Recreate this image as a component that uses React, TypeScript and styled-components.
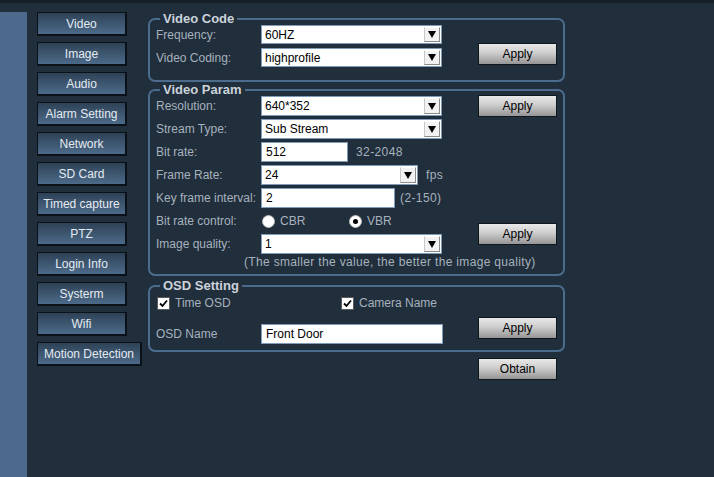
import React from "react";
import styled, { createGlobalStyle } from "styled-components";

const Global = createGlobalStyle`
  html, body { margin: 0; padding: 0; }
  body {
    background: #212e3b;
    font-family: "Liberation Sans", Arial, sans-serif;
    font-size: 12px;
  }
  * { box-sizing: border-box; }
`;

const Page = styled.div`
  min-height: 100vh;
  display: flex;
  flex-direction: column;
`;

const TopBar = styled.div`
  height: 3px;
  background: #161e27;
`;

const Main = styled.div`
  flex: 1;
  display: flex;
  align-items: stretch;
  padding-top: 9px;
`;

const LeftStrip = styled.div`
  width: 27px;
  background: #4c6b8c;
`;

const Sidebar = styled.nav`
  width: 105px;
  margin-left: 10px;
  display: flex;
  flex-direction: column;
  align-items: flex-start;
  gap: 6px;
`;

const NavButton = styled.div<{ $wide?: boolean }>`
  width: ${(p) => (p.$wide ? "105px" : "90px")};
  height: 24px;
  border: 1px solid #0b1118;
  border-right-width: 2px;
  border-bottom-width: 2px;
  background: linear-gradient(#2e4256, #4c6a89);
  color: #e4ebf2;
  font-size: 12px;
  display: flex;
  align-items: center;
  justify-content: center;
  white-space: nowrap;
`;

const Content = styled.div`
  width: 417px;
  margin-left: 6px;
  display: flex;
  flex-direction: column;
`;

const Group = styled.fieldset<{ $gapTop: number; $padBottom: number }>`
  margin: ${(p) => p.$gapTop}px 0 0 0;
  padding: 0 6px ${(p) => p.$padBottom}px 6px;
  border: 2px solid #4b6c8d;
  border-radius: 7px;
  min-width: 0;
`;

const Legend = styled.legend`
  margin-left: 4px;
  padding: 0 3px;
  font-size: 13px;
  line-height: 14px;
  font-weight: bold;
  color: #cbd3db;
`;

const Grid = styled.div<{ $rows: string; $gap: number; $shift: number }>`
  display: grid;
  grid-template-columns: 105px 217px 79px;
  grid-template-rows: ${(p) => p.$rows};
  row-gap: ${(p) => p.$gap}px;
  margin-top: ${(p) => p.$shift}px;
`;

const Label = styled.div<{ $row: number }>`
  grid-column: 1;
  grid-row: ${(p) => p.$row};
  color: #a6b2be;
  font-size: 12px;
  display: flex;
  align-items: center;
  white-space: nowrap;
`;

const Cell = styled.div<{ $row: number }>`
  grid-column: 2;
  grid-row: ${(p) => p.$row};
  display: flex;
  align-items: center;
  gap: 8px;
  color: #a6b2be;
  white-space: nowrap;
`;

const SelectBox = styled.div<{ $w: number }>`
  width: ${(p) => p.$w}px;
  height: 100%;
  background: #fff;
  border: 1px solid #7f9bb7;
  display: flex;
  align-items: stretch;
  padding: 1px;
`;

const SelectText = styled.span`
  flex: 1;
  color: #000;
  font-size: 12px;
  display: flex;
  align-items: center;
  padding-left: 2px;
`;

const ArrowBox = styled.span`
  width: 16px;
  background: #f2f2f2;
  border: 1px solid;
  border-color: #ffffff #8c8c8c #8c8c8c #c8c8c8;
  display: flex;
  align-items: center;
  justify-content: center;
`;

const Tri = styled.span`
  width: 0;
  height: 0;
  border-left: 4px solid transparent;
  border-right: 4px solid transparent;
  border-top: 7px solid #000;
`;

const TextInput = styled.div<{ $w: number }>`
  width: ${(p) => p.$w}px;
  height: 100%;
  background: #fff;
  border: 1px solid #7f9bb7;
  color: #000;
  font-size: 12px;
  display: flex;
  align-items: center;
  padding-left: 4px;
`;

const Note = styled.span<{ $ml?: number }>`
  color: #a6b2be;
  font-size: 12px;
  letter-spacing: 0.4px;
  margin-left: ${(p) => p.$ml ?? 0}px;
`;

const ActionButton = styled.div<{
  $row: string;
  $align: string;
  $mb?: number;
}>`
  grid-column: 3;
  grid-row: ${(p) => p.$row};
  align-self: ${(p) => p.$align};
  margin-bottom: ${(p) => p.$mb ?? 0}px;
  width: 79px;
  height: 22px;
  border: 1px solid #10161d;
  background: linear-gradient(#e8e8e8, #cdcdcd 45%, #bdbdbd 60%, #959595);
  color: #000;
  font-size: 12px;
  display: flex;
  align-items: center;
  justify-content: center;
`;

const ObtainButton = styled(ActionButton)`
  align-self: flex-end;
  margin: 6px 8px 0 0;
`;

const RadioRow = styled.div`
  display: flex;
  align-items: center;
  width: 100%;
  padding-left: 1px;
`;

const RadioItem = styled.div<{ $w?: number }>`
  display: flex;
  align-items: center;
  gap: 5px;
  width: ${(p) => (p.$w ? `${p.$w}px` : "auto")};
  color: #a6b2be;
`;

const RadioDot = styled.span<{ $on?: boolean }>`
  width: 13px;
  height: 13px;
  border-radius: 50%;
  background: #fff;
  border: 1px solid #b8b8b8;
  display: flex;
  align-items: center;
  justify-content: center;
  &::after {
    content: "";
    width: 5px;
    height: 5px;
    border-radius: 50%;
    background: ${(p) => (p.$on ? "#000" : "transparent")};
  }
`;

const Hint = styled.div`
  color: #a6b2be;
  font-size: 12px;
  line-height: 14px;
  letter-spacing: 0.33px;
  margin: 1px 0 0 88px;
  white-space: nowrap;
`;

const CheckRow = styled.div`
  grid-column: 1 / 3;
  grid-row: 1;
  display: flex;
  align-items: center;
  padding-left: 1px;
`;

const CheckItem = styled.div<{ $w?: number }>`
  display: flex;
  align-items: center;
  gap: 5px;
  width: ${(p) => (p.$w ? `${p.$w}px` : "auto")};
  color: #a6b2be;
  font-size: 12px;
`;

const CheckBox = styled.span`
  width: 13px;
  height: 13px;
  background: #fff;
  border: 1px solid #5a5a5a;
  display: flex;
  align-items: center;
  justify-content: center;
`;

const Select = ({ value, w }: { value: string; w: number }) => (
  <SelectBox $w={w}>
    <SelectText>{value}</SelectText>
    <ArrowBox>
      <Tri />
    </ArrowBox>
  </SelectBox>
);

const Check = ({ label, w }: { label: string; w?: number }) => (
  <CheckItem $w={w}>
    <CheckBox>
      <svg width="9" height="9" viewBox="0 0 9 9">
        <path d="M1 4.5 L3.5 7 L8 1.5" stroke="#000" strokeWidth="1.8" fill="none" />
      </svg>
    </CheckBox>
    {label}
  </CheckItem>
);

const navItems = [
  "Video",
  "Image",
  "Audio",
  "Alarm Setting",
  "Network",
  "SD Card",
  "Timed capture",
  "PTZ",
  "Login Info",
  "Systerm",
  "Wifi",
];

export default function App() {
  return (
    <Page>
      <Global />
      <TopBar />
      <Main>
        <LeftStrip />
        <Sidebar>
          {navItems.map((n) => (
            <NavButton key={n}>{n}</NavButton>
          ))}
          <NavButton $wide>Motion Detection</NavButton>
        </Sidebar>
        <Content>
          <Group $gapTop={0} $padBottom={13}>
            <Legend>Video Code</Legend>
            <Grid $rows="19px 19px" $gap={4} $shift={-1}>
              <Label $row={1}>Frequency:</Label>
              <Cell $row={1}>
                <Select value="60HZ" w={181} />
              </Cell>
              <Label $row={2}>Video Coding:</Label>
              <Cell $row={2}>
                <Select value="highprofile" w={181} />
              </Cell>
              <ActionButton $row="2" $align="end" $mb={2}>
                Apply
              </ActionButton>
            </Grid>
          </Group>

          <Group $gapTop={1} $padBottom={5}>
            <Legend>Video Param</Legend>
            <Grid $rows="repeat(7, 20px)" $gap={3} $shift={-1}>
              <Label $row={1}>Resolution:</Label>
              <Cell $row={1}>
                <Select value="640*352" w={181} />
              </Cell>
              <ActionButton $row="1" $align="center">
                Apply
              </ActionButton>
              <Label $row={2}>Stream Type:</Label>
              <Cell $row={2}>
                <Select value="Sub Stream" w={181} />
              </Cell>
              <Label $row={3}>Bit rate:</Label>
              <Cell $row={3}>
                <TextInput $w={87}>512</TextInput>
                <Note>32-2048</Note>
              </Cell>
              <Label $row={4}>Frame Rate:</Label>
              <Cell $row={4}>
                <Select value="24" w={157} />
                <Note>fps</Note>
              </Cell>
              <Label $row={5}>Key frame interval:</Label>
              <Cell $row={5}>
                <TextInput $w={134}>2</TextInput>
                <Note $ml={-3}>(2-150)</Note>
              </Cell>
              <Label $row={6}>Bit rate control:</Label>
              <Cell $row={6}>
                <RadioRow>
                  <RadioItem $w={87}>
                    <RadioDot />
                    CBR
                  </RadioItem>
                  <RadioItem>
                    <RadioDot $on />
                    VBR
                  </RadioItem>
                </RadioRow>
              </Cell>
              <Label $row={7}>Image quality:</Label>
              <Cell $row={7}>
                <Select value="1" w={181} />
              </Cell>
              <ActionButton $row="6 / 8" $align="end" $mb={9}>
                Apply
              </ActionButton>
            </Grid>
            <Hint>(The smaller the value, the better the image quality)</Hint>
          </Group>

          <Group $gapTop={3} $padBottom={6}>
            <Legend>OSD Setting</Legend>
            <Grid $rows="16px 20px" $gap={13} $shift={2}>
              <CheckRow>
                <Check label="Time OSD" w={184} />
                <Check label="Camera Name" />
              </CheckRow>
              <Label $row={2}>OSD Name</Label>
              <Cell $row={2}>
                <TextInput $w={182}>Front Door</TextInput>
              </Cell>
              <ActionButton $row="2" $align="end" $mb={5}>
                Apply
              </ActionButton>
            </Grid>
          </Group>

          <ObtainButton $row="auto" $align="flex-end">
            Obtain
          </ObtainButton>
        </Content>
      </Main>
    </Page>
  );
}
